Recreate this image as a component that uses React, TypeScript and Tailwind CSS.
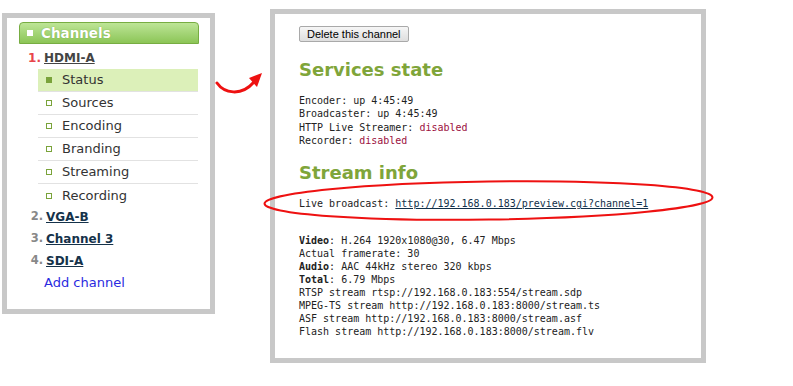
const subItems = ['Status', 'Sources', 'Encoding', 'Branding', 'Streaming', 'Recording']

const otherChannels = [
  { n: '2.', name: 'VGA-B' },
  { n: '3.', name: 'Channel 3' },
  { n: '4.', name: 'SDI-A' },
]

function Sidebar() {
  return (
    <div className="ml-[2px] mt-[13px] w-[213px] h-[301px] border-[5px] border-[#c8c8c8] bg-white font-['DejaVu_Sans',sans-serif]">
      <div className="ml-[12px] mt-[4px] w-[180px] h-[22px] rounded-t-[4px] border border-[#77ad42] bg-gradient-to-b from-[#bde596] to-[#8cc556] flex items-center">
        <span className="ml-[7px] w-[6px] h-[6px] bg-white" />
        <span className="ml-[8px] text-[13.5px] font-bold text-white [text-shadow:0_0_1px_#6a9a3a]">Channels</span>
      </div>

      <div className="mt-[3px] h-[22px] flex items-center">
        <span className="w-[34px] text-right text-[12px] font-bold text-[#e8454a]">1.</span>
        <span className="ml-[3px] text-[12px] font-bold text-[#444] underline">HDMI-A</span>
      </div>

      <ul className="ml-[31px] w-[160px]">
        {subItems.map((s, i) => (
          <li
            key={s}
            className={`h-[23px] flex items-center ${i === 0 ? 'bg-[#dcf0b9]' : ''} ${i < subItems.length - 1 ? 'border-b border-[#e2e2e2]' : ''}`}
          >
            <span
              className={`ml-[8px] w-[6px] h-[6px] ${i === 0 ? 'bg-[#7aa33a]' : 'border border-[#7aa33a]'}`}
            />
            <span className="ml-[10px] text-[13px] text-[#333]">{s}</span>
          </li>
        ))}
      </ul>

      <div className="mt-[-1px]">
        {otherChannels.map((c) => (
          <div key={c.name} className="h-[22px] flex items-center">
            <span className="w-[36px] text-right text-[11.5px] font-bold text-[#888]">{c.n}</span>
            <span className="ml-[3px] text-[12px] font-bold text-[#15324a] underline">{c.name}</span>
          </div>
        ))}
        <div className="h-[22px] flex items-center">
          <span className="ml-[37px] text-[13px] text-[#2a2ae0]">Add channel</span>
        </div>
      </div>
    </div>
  )
}

function Arrow() {
  return (
    <div className="w-[55px] shrink-0">
      <svg width="55" height="40" viewBox="0 0 55 40" className="mt-[60px]">
        <path d="M2 23 C 9 33, 26 37, 39 22" fill="none" stroke="#ee1111" strokeWidth="3" strokeLinecap="round" />
        <polygon points="47,13 34,18 42,27" fill="#ee1111" />
      </svg>
    </div>
  )
}

function Mono({ children, className = '' }: { children: React.ReactNode; className?: string }) {
  return <div className={`font-['DejaVu_Sans_Mono',monospace] text-[10px] text-[#222] whitespace-pre ${className}`}>{children}</div>
}

function Details() {
  return (
    <div className="relative mt-[9px] w-[436px] h-[354px] border-[5px] border-[#c8c8c8] bg-white">
      <div className="pl-[24px] pt-[12px]">
        <button className="block h-[16px] px-[7px] rounded-[2px] border border-[#a9a9a9] bg-gradient-to-b from-[#f6f6f6] to-[#dedede] text-[11px] leading-[14px] text-black font-['Liberation_Sans',sans-serif]">
          Delete this channel
        </button>

        <h2 className="mt-[17px] text-[18px] leading-[22px] font-bold text-[#7fa53a] font-['DejaVu_Sans',sans-serif]">Services state</h2>

        <Mono className="mt-[13px] leading-[13.3px]">
          <div>Encoder: up 4:45:49</div>
          <div>Broadcaster: up 4:45:49</div>
          <div>HTTP Live Streamer: <span className="text-[#9c1040]">disabled</span></div>
          <div>Recorder: <span className="text-[#9c1040]">disabled</span></div>
        </Mono>

        <h2 className="mt-[15px] text-[18px] leading-[22px] font-bold text-[#7fa53a] font-['DejaVu_Sans',sans-serif]">Stream info</h2>

        <Mono className="mt-[13px] leading-[13px]">
          Live broadcast: <span className="text-[#12304a] underline">http://192.168.0.183/preview.cgi?channel=1</span>
        </Mono>

        <Mono className="mt-[24px] leading-[13px]">
          <div><b>Video</b>: H.264 1920x1080@30, 6.47 Mbps</div>
          <div>Actual framerate: 30</div>
          <div><b>Audio</b>: AAC 44kHz stereo 320 kbps</div>
          <div><b>Total</b>: 6.79 Mbps</div>
          <div>RTSP stream rtsp://192.168.0.183:554/stream.sdp</div>
          <div>MPEG-TS stream http://192.168.0.183:8000/stream.ts</div>
          <div>ASF stream http://192.168.0.183:8000/stream.asf</div>
          <div>Flash stream http://192.168.0.183:8000/stream.flv</div>
        </Mono>
      </div>

      <svg width="451" height="41" viewBox="0 0 451 41" className="absolute left-[-12px] top-[166px]">
        <ellipse cx="225.5" cy="20.5" rx="224" ry="19" fill="none" stroke="#ee1111" strokeWidth="2" transform="rotate(-0.8 225.5 20.5)" />
      </svg>
    </div>
  )
}

export default function App() {
  return (
    <div className="w-[793px] h-[386px] bg-white flex items-start">
      <Sidebar />
      <Arrow />
      <Details />
    </div>
  )
}
